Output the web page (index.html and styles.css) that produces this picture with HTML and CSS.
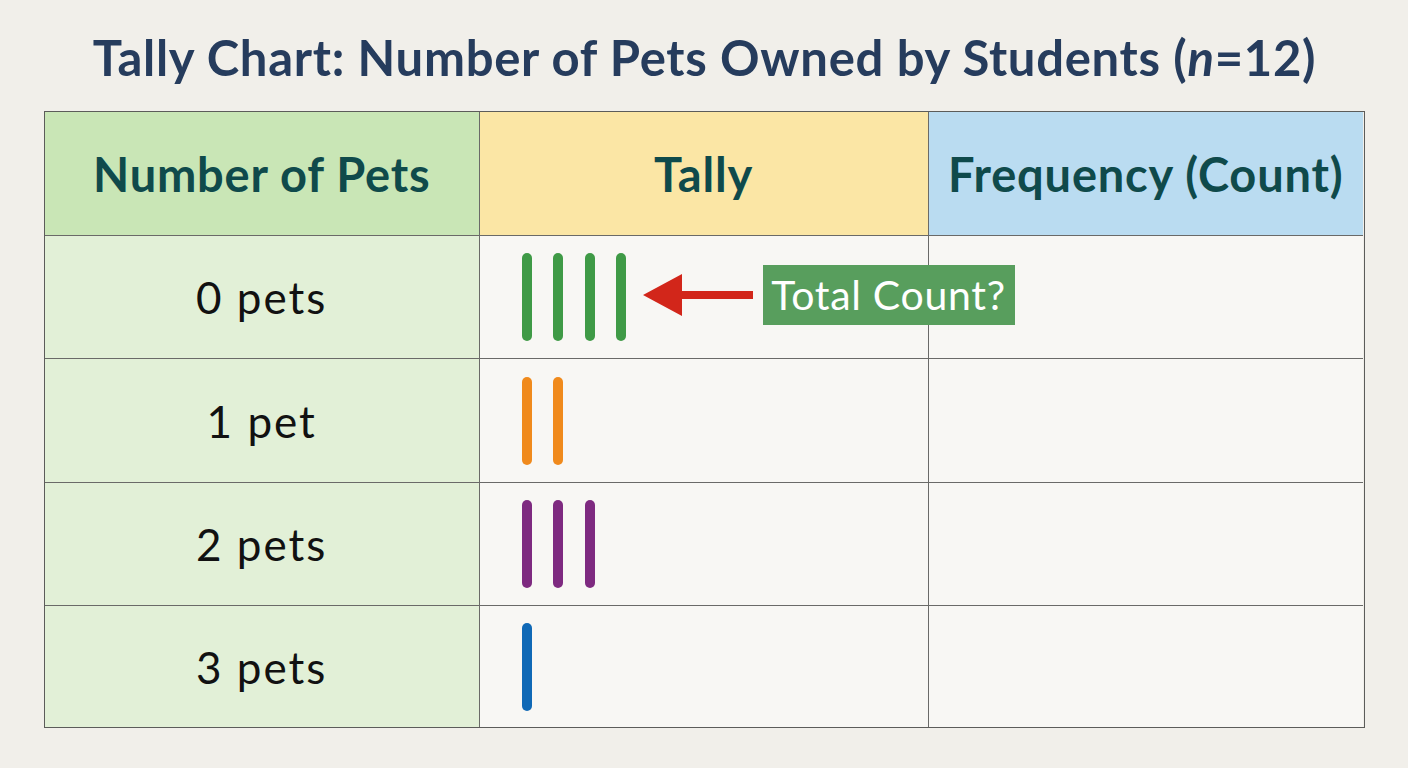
FILE: index.html
```html
<!DOCTYPE html>
<html lang="en">
<head>
<meta charset="utf-8">
<title>Tally Chart</title>
<link rel="stylesheet" href="styles.css">
</head>
<body>
<main class="page">
  <h1 class="title">Tally Chart: Number of Pets Owned by Students (<i>n</i>=12)</h1>
  <div class="table">
    <div class="cell head head-pets">Number of Pets</div>
    <div class="cell head head-tally">Tally</div>
    <div class="cell head head-freq">Frequency (Count)</div>

    <div class="cell label">0 pets</div>
    <div class="cell tally"><span class="mark green"></span><span class="mark green"></span><span class="mark green"></span><span class="mark green"></span></div>
    <div class="cell freq"></div>

    <div class="cell label">1 pet</div>
    <div class="cell tally"><span class="mark orange"></span><span class="mark orange"></span></div>
    <div class="cell freq"></div>

    <div class="cell label">2 pets</div>
    <div class="cell tally"><span class="mark purple"></span><span class="mark purple"></span><span class="mark purple"></span></div>
    <div class="cell freq"></div>

    <div class="cell label last">3 pets</div>
    <div class="cell tally last"><span class="mark blue"></span></div>
    <div class="cell freq last"></div>

    <svg class="arrow" width="110" height="42" viewBox="0 0 110 42" aria-hidden="true">
      <polygon points="0,21 39,0 39,17 110,17 110,25 39,25 39,42" fill="#d2261a"/>
    </svg>
    <div class="callout">Total Count?</div>
  </div>
</main>
</body>
</html>
```

FILE: styles.css
```css
* { box-sizing: border-box; }
html, body { margin: 0; padding: 0; }
body {
  width: 1408px;
  height: 768px;
  overflow: hidden;
  background: #f1efea;
  font-family: "Lato", "Liberation Sans", sans-serif;
}
.page {
  padding: 27px 43px 0 44px;
}
.title {
  margin: 0;
  height: 84px;
  text-align: center;
  font-size: 49px;
  font-weight: 700;
  line-height: 60px;
  color: #263c5d;
  letter-spacing: 0.7px;
}
.title i { font-style: italic; font-weight: 700; }
.table {
  position: relative;
  display: grid;
  grid-template-columns: 434.5px 449px 434.5px;
  grid-template-rows: 124px 123px 124px 123px 121px;
  width: 1321px;
  border: 1.5px solid #5c5c5a;
}
.cell {
  display: flex;
  align-items: center;
  border-right: 1.5px solid #6a6a68;
  border-bottom: 1.5px solid #6a6a68;
  background: #f8f7f4;
}
.cell:nth-child(3n) { border-right: none; }
.cell.last { border-bottom: none; }
.head {
  justify-content: center;
  font-size: 47px;
  font-weight: 700;
  color: #0f4a4b;
  letter-spacing: 0.8px;
}
.head-pets { background: #c9e6b6; }
.head-tally { background: #fbe6a5; }
.head-freq { background: #badcf1; }
.label {
  justify-content: center;
  background: #e2f0d7;
  font-size: 44px;
  letter-spacing: 2px;
  color: #111;
}
.tally {
  padding-left: 42px;
  gap: 21.5px;
}
.mark {
  display: block;
  width: 10px;
  height: 88px;
  border-radius: 5px;
}
.green { background: #3f9a46; }
.orange { background: #f08a1c; }
.purple { background: #7e2a80; }
.blue { background: #1069b6; }
.arrow {
  position: absolute;
  left: 597.5px;
  top: 161.5px;
}
.callout {
  position: absolute;
  left: 717.5px;
  top: 152.5px;
  width: 252px;
  height: 60px;
  display: flex;
  align-items: center;
  justify-content: center;
  background: #589e5d;
  color: #fff;
  font-size: 41px;
  font-weight: 400;
  letter-spacing: 0.7px;
}
```
